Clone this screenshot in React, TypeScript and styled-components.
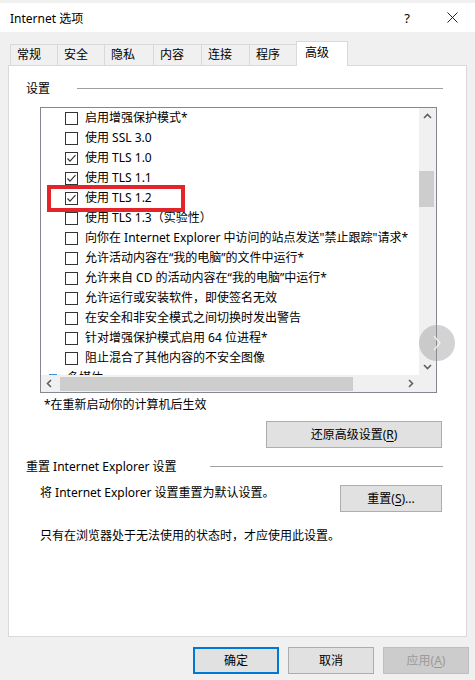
import styled, { createGlobalStyle } from 'styled-components';

const tabs = ['常规', '安全', '隐私', '内容', '连接', '程序', '高级'];
// widths include the 1px border that overlaps the previous tab
const tabWidths = [48, 48, 50, 49, 49, 48, 52];

const options = [
  { label: '启用增强保护模式*', checked: false },
  { label: '使用 SSL 3.0', checked: false },
  { label: '使用 TLS 1.0', checked: true },
  { label: '使用 TLS 1.1', checked: true },
  { label: '使用 TLS 1.2', checked: true },
  { label: '使用 TLS 1.3（实验性）', checked: false },
  { label: '向你在 Internet Explorer 中访问的站点发送"禁止跟踪"请求*', checked: false },
  { label: '允许活动内容在“我的电脑”的文件中运行*', checked: false },
  { label: '允许来自 CD 的活动内容在“我的电脑”中运行*', checked: false },
  { label: '允许运行或安装软件，即使签名无效', checked: false },
  { label: '在安全和非安全模式之间切换时发出警告', checked: false },
  { label: '针对增强保护模式启用 64 位进程*', checked: false },
  { label: '阻止混合了其他内容的不安全图像', checked: false },
];

const Chevron = ({ dir }: { dir: 'up' | 'down' | 'left' | 'right' }) => {
  const points = {
    up: '1,6 4.5,2.5 8,6',
    down: '1,3 4.5,6.5 8,3',
    left: '6,1 2.5,4.5 6,8',
    right: '3,1 6.5,4.5 3,8',
  }[dir];
  return (
    <svg width="9" height="9" viewBox="0 0 9 9">
      <polyline points={points} fill="none" stroke="#606060" strokeWidth="1.6" />
    </svg>
  );
};

function App() {
  return (
    <>
      <GlobalStyle />
      <StyledWindow>
        <StyledTitleBar>
          <span>Internet 选项</span>
          <StyledTitleButtons>
            <span>?</span>
            <svg width="11" height="11" viewBox="0 0 11 11">
              <path d="M0.5 0.5 L10.5 10.5 M10.5 0.5 L0.5 10.5" stroke="#222" strokeWidth="1" />
            </svg>
          </StyledTitleButtons>
        </StyledTitleBar>

        <StyledTabStrip>
          {tabs.map((t, i) => (
            <StyledTab key={t} $active={i === tabs.length - 1} $width={tabWidths[i]}>
              {t}
            </StyledTab>
          ))}
        </StyledTabStrip>

        <StyledPanel>
          <StyledGroupHeader $gap={27}>设置</StyledGroupHeader>
          <StyledListBox>
            <StyledListContent>
              {options.map((o) => (
                <StyledRow key={o.label}>
                  <StyledCheckbox>
                    {o.checked && (
                      <svg width="11" height="11" viewBox="0 0 11 11">
                        <polyline points="1.5,5.5 4,8.2 9.5,2.2" fill="none" stroke="#333" strokeWidth="1.2" />
                      </svg>
                    )}
                  </StyledCheckbox>
                  {o.label}
                </StyledRow>
              ))}
              <StyledCategoryRow>
                <svg width="12" height="12" viewBox="0 0 12 12">
                  <rect x="2" y="2" width="8" height="8" fill="#3c8fd6" />
                  <rect x="4" y="4" width="4" height="4" fill="#d7ebfa" />
                </svg>
                多媒体
              </StyledCategoryRow>
            </StyledListContent>
            <StyledVScroll>
              <StyledArrowBox>
                <Chevron dir="up" />
              </StyledArrowBox>
              <StyledVThumb />
              <StyledArrowBox>
                <Chevron dir="down" />
              </StyledArrowBox>
            </StyledVScroll>
            <StyledHScroll>
              <StyledArrowBox>
                <Chevron dir="left" />
              </StyledArrowBox>
              <StyledHThumb />
              <StyledArrowBox>
                <Chevron dir="right" />
              </StyledArrowBox>
            </StyledHScroll>
            <StyledCorner />
            <StyledHighlight />
          </StyledListBox>

          <StyledNote>*在重新启动你的计算机后生效</StyledNote>
          <StyledButtonRow>
            <StyledButton $width={176}>
              还原高级设置(<u>R</u>)
            </StyledButton>
          </StyledButtonRow>

          <StyledGroupHeader $gap={33} $top={11}>
            重置 Internet Explorer 设置
          </StyledGroupHeader>
          <StyledResetRow>
            <StyledText>将 Internet Explorer 设置重置为默认设置。</StyledText>
            <StyledButton $width={102}>
              重置(<u>S</u>)...
            </StyledButton>
          </StyledResetRow>
          <StyledText $top={17}>只有在浏览器处于无法使用的状态时，才应使用此设置。</StyledText>
        </StyledPanel>

        <StyledFooter>
          <StyledButton $width={86} $primary>
            确定
          </StyledButton>
          <StyledButton $width={86}>取消</StyledButton>
          <StyledButton $width={86} $disabled>
            应用(<u>A</u>)
          </StyledButton>
        </StyledFooter>

        <StyledScrollHint>
          <svg width="10" height="16" viewBox="0 0 10 16">
            <polyline points="2,1 8,8 2,15" fill="none" stroke="#f2f2f2" strokeWidth="1.2" />
          </svg>
        </StyledScrollHint>
      </StyledWindow>
    </>
  );
}

export default App;

const GlobalStyle = createGlobalStyle`
  body {
    margin: 0;
    background: #f0f0f0;
  }
  * {
    box-sizing: border-box;
  }
`;

const StyledWindow = styled.div`
  position: relative;
  width: 475px;
  height: 680px;
  padding-top: 3px;
  background: #f0f0f0;
  font-family: 'Segoe UI', 'Noto Sans', 'Noto Sans CJK SC', sans-serif;
  font-size: 12px;
  color: #000;
  overflow: hidden;
`;

const StyledTitleBar = styled.div`
  height: 29px;
  background: #fff;
  display: flex;
  align-items: center;
  justify-content: space-between;
  padding: 0 17px 0 10px;
  font-size: 12px;
`;

const StyledTitleButtons = styled.div`
  display: flex;
  align-items: center;
  gap: 37px;
  font-size: 13px;
`;

const StyledTabStrip = styled.div`
  display: flex;
  align-items: flex-end;
  height: 25px;
  margin: 9px 0 -1px 11px;
  position: relative;
  z-index: 1;
`;

const StyledTab = styled.div<{ $active?: boolean; $width: number }>`
  width: ${(p) => p.$width}px;
  height: ${(p) => (p.$active ? 25 : 22)}px;
  padding-left: ${(p) => (p.$active ? 8 : 6)}px;
  padding-top: ${(p) => (p.$active ? 3 : 2)}px;
  line-height: 16px;
  background: ${(p) => (p.$active ? '#fff' : '#f0f0f0')};
  border: 1px solid #d9d9d9;
  border-bottom: ${(p) => (p.$active ? 'none' : '1px solid #d9d9d9')};
  margin-left: -1px;
`;

const StyledPanel = styled.div`
  margin: 0 8px;
  height: 572px;
  background: #fff;
  border: 1px solid #d9d9d9;
  padding: 0 23px 0 17px;
  display: flex;
  flex-direction: column;
`;

const StyledGroupHeader = styled.div<{ $gap: number; $top?: number }>`
  margin-top: ${(p) => p.$top ?? 15}px;
  height: 16px;
  line-height: 16px;
  display: flex;
  align-items: center;
  gap: ${(p) => p.$gap}px;

  &::after {
    content: '';
    flex: 1;
    border-top: 1px solid #a0a0a0;
    margin-top: -1px;
  }
`;

const StyledListBox = styled.div`
  position: relative;
  margin: 10px 6px 0 14px;
  height: 286px;
  border: 1px solid #828790;
  display: grid;
  grid-template-columns: 1fr 17px;
  grid-template-rows: 1fr 17px;
  overflow: hidden;
`;

const StyledListContent = styled.div`
  overflow: hidden;
  background: #fff;
`;

const StyledRow = styled.div`
  height: 20px;
  display: flex;
  align-items: center;
  gap: 7px;
  padding-left: 24px;
  white-space: nowrap;
  line-height: 16px;
`;

const StyledCategoryRow = styled(StyledRow)`
  padding-left: 6px;
  gap: 8px;
`;

const StyledCheckbox = styled.span`
  width: 13px;
  height: 13px;
  flex: none;
  border: 1px solid #333;
  background: #fff;
  display: flex;
  align-items: center;
  justify-content: center;
`;

const StyledVScroll = styled.div`
  background: #f0f0f0;
  display: flex;
  flex-direction: column;
  justify-content: space-between;
  position: relative;
`;

const StyledArrowBox = styled.div`
  width: 17px;
  height: 17px;
  flex: none;
  display: flex;
  align-items: center;
  justify-content: center;
`;

const StyledVThumb = styled.div`
  width: 15px;
  height: 36px;
  margin: 0 1px 0 0;
  background: #cdcdcd;
  align-self: flex-start;
  margin-top: 46px;
  margin-bottom: auto;
`;

const StyledHScroll = styled.div`
  background: #f0f0f0;
  display: flex;
  align-items: center;
`;

const StyledHThumb = styled.div`
  width: 293px;
  height: 14px;
  margin-left: 2px;
  margin-right: auto;
  background: #cdcdcd;
`;

const StyledCorner = styled.div`
  background: #f0f0f0;
`;

const StyledHighlight = styled.div`
  position: absolute;
  left: 6px;
  top: 77px;
  width: 138px;
  height: 27px;
  border: 4px solid #e3242b;
`;

const StyledNote = styled.div`
  margin-top: 5px;
  padding-left: 18px;
  line-height: 14px;
`;

const StyledButtonRow = styled.div`
  display: flex;
  justify-content: flex-end;
  margin: 9px 1px 0 0;
`;

const StyledButton = styled.div<{ $width: number; $primary?: boolean; $disabled?: boolean }>`
  width: ${(p) => p.$width}px;
  height: 27px;
  display: flex;
  align-items: center;
  justify-content: center;
  background: ${(p) => (p.$disabled ? '#cccccc' : '#e1e1e1')};
  border: ${(p) =>
    p.$primary ? '2px solid #0078d7' : p.$disabled ? '1px solid #bfbfbf' : '1px solid #adadad'};
  color: ${(p) => (p.$disabled ? '#9a9a9a' : '#000')};
  line-height: 16px;
  flex: none;

  u {
    text-underline-offset: 2px;
  }
`;

const StyledResetRow = styled.div`
  display: flex;
  justify-content: space-between;
  align-items: flex-start;
  margin: 10px 1px 0 0;
  padding-left: 14px;
`;

const StyledText = styled.div<{ $top?: number }>`
  margin-top: ${(p) => p.$top ?? 1}px;
  padding-left: ${(p) => (p.$top ? 14 : 0)}px;
  line-height: 14px;
`;

const StyledFooter = styled.div`
  display: flex;
  justify-content: flex-end;
  gap: 9px;
  margin-top: 10px;
  padding-right: 6px;
`;

const StyledScrollHint = styled.div`
  position: absolute;
  left: 419px;
  top: 325px;
  width: 36px;
  height: 36px;
  border-radius: 50%;
  background: rgba(150, 150, 150, 0.42);
  display: flex;
  align-items: center;
  justify-content: center;
`;
